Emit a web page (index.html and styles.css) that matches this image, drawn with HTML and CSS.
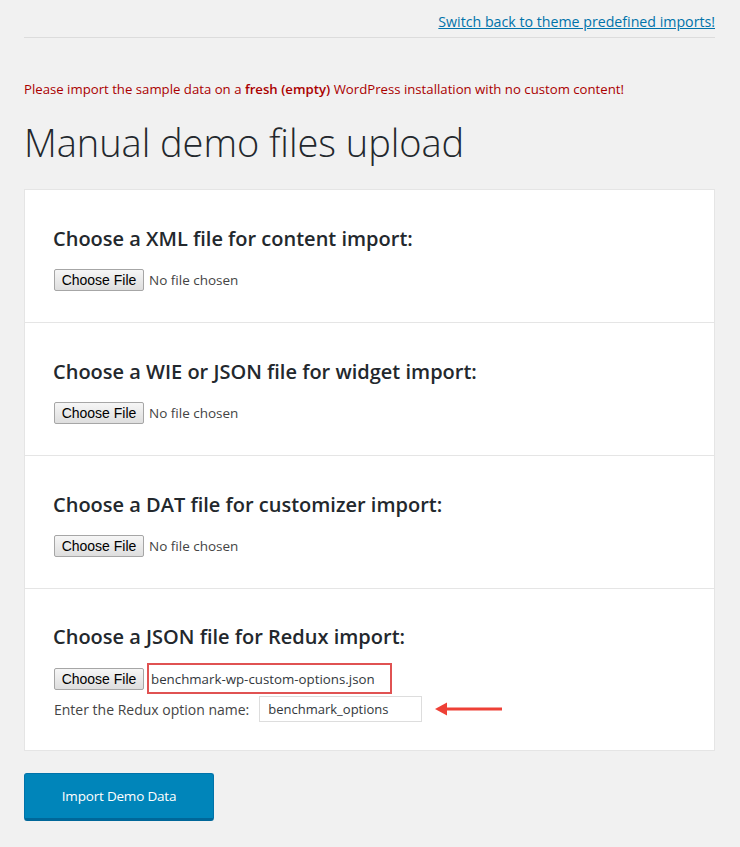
FILE: index.html
```html
<!DOCTYPE html>
<html lang="en">
<head>
<meta charset="utf-8">
<title>Manual demo files upload</title>
<link rel="stylesheet" href="styles.css">
</head>
<body>
<div class="page">
  <div class="topbar">
    <a class="switch-link" href="#">Switch back to theme predefined imports!</a>
  </div>
  <p class="notice">Please import the sample data on a <strong>fresh (empty)</strong> WordPress installation with no custom content!</p>
  <h1 class="title">Manual demo files upload</h1>
  <div class="card">
    <div class="section">
      <h2 class="section-title">Choose a XML file for content import:</h2>
      <div class="file-row">
        <button class="file-btn" type="button">Choose File</button>
        <span class="file-name">No file chosen</span>
      </div>
    </div>
    <div class="section">
      <h2 class="section-title">Choose a WIE or JSON file for widget import:</h2>
      <div class="file-row">
        <button class="file-btn" type="button">Choose File</button>
        <span class="file-name">No file chosen</span>
      </div>
    </div>
    <div class="section">
      <h2 class="section-title">Choose a DAT file for customizer import:</h2>
      <div class="file-row">
        <button class="file-btn" type="button">Choose File</button>
        <span class="file-name">No file chosen</span>
      </div>
    </div>
    <div class="section section-last">
      <h2 class="section-title">Choose a JSON file for Redux import:</h2>
      <div class="file-row">
        <button class="file-btn" type="button">Choose File</button>
        <span class="file-name highlighted">benchmark-wp-custom-options.json</span>
      </div>
      <div class="option-row">
        <label class="option-label">Enter the Redux option name:</label>
        <span class="option-input">benchmark_options</span>
        <svg class="arrow" width="68" height="14" viewBox="0 0 68 14" aria-hidden="true">
          <polygon points="0,7 12,0.5 12,13.5" fill="#ee4036"/>
          <rect x="11" y="5.5" width="56" height="3" fill="#ee4036"/>
        </svg>
      </div>
    </div>
  </div>
  <button class="import-btn" type="button">Import Demo Data</button>
</div>
</body>
</html>
```

FILE: styles.css
```css
html, body {
  margin: 0;
  padding: 0;
  background: #f1f1f1;
}

body {
  font-family: "Open Sans", "Noto Sans", "Liberation Sans", sans-serif;
  color: #23282d;
}

.page {
  padding: 12px 25px 26px 24px;
}

.topbar {
  display: flex;
  justify-content: flex-end;
  padding-bottom: 5px;
  border-bottom: 1px solid #dcdcdc;
}

.switch-link {
  font-size: 14.2px;
  line-height: 20px;
  color: #0073aa;
  text-decoration: underline;
}

.notice {
  margin: 42px 0 0;
  font-size: 13.2px;
  line-height: 18px;
  color: #a00;
}

.notice strong {
  font-weight: 600;
}

.title {
  margin: 19px 0 0;
  font-size: 38px;
  font-weight: 300;
  line-height: 50px;
  color: #23282d;
  letter-spacing: -0.05px;
}

.card {
  margin-top: 22px;
  background: #fff;
  border: 1px solid #e5e5e5;
}

.section {
  height: 133px;
  box-sizing: border-box;
  padding: 36px 29px 0 28px;
  border-bottom: 1px solid #e5e5e5;
}

.section-last {
  border-bottom: 0;
  height: 161px;
  padding-top: 35px;
}

.section-title {
  margin: 0;
  font-size: 20px;
  font-weight: 600;
  line-height: 26px;
  color: #23282d;
}

.file-row {
  display: flex;
  align-items: center;
  margin-top: 17px;
  margin-left: 1px;
  height: 22px;
}

.section-last .file-row {
  margin-top: 13px;
  height: 31px;
}

.file-btn {
  box-sizing: border-box;
  width: 90px;
  height: 22px;
  padding: 0;
  font-family: "Liberation Sans", Arial, sans-serif;
  font-size: 14px;
  color: #000;
  background: linear-gradient(#f6f6f6, #dedede);
  border: 1px solid #a6a6a6;
  border-radius: 2px;
}

.file-name {
  margin-left: 5px;
  font-size: 13.5px;
  color: #444;
}

.file-name.highlighted {
  box-sizing: border-box;
  display: flex;
  align-items: center;
  width: 245px;
  height: 31px;
  margin-left: 3px;
  padding-left: 2px;
  font-size: 13.3px;
  border: 2px solid #e05252;
  color: #32373c;
}

.option-row {
  display: flex;
  align-items: center;
  margin-top: 2px;
  margin-left: 1px;
}

.option-label {
  font-size: 14px;
  color: #444;
}

.option-input {
  box-sizing: border-box;
  display: flex;
  align-items: center;
  width: 163px;
  height: 26px;
  margin-left: 10px;
  padding-left: 8px;
  font-size: 13px;
  color: #32373c;
  background: #fff;
  border: 1px solid #ddd;
}

.arrow {
  margin-left: 13px;
  display: block;
}

.import-btn {
  display: block;
  box-sizing: border-box;
  width: 190px;
  height: 48px;
  margin-top: 22px;
  padding: 0;
  font-family: "Open Sans", "Noto Sans", sans-serif;
  font-size: 13.5px;
  color: #fff;
  background: #0085ba;
  border: 1px solid #0073aa;
  border-bottom: 3px solid #006799;
  border-radius: 3px;
  letter-spacing: -0.2px;
}
```
